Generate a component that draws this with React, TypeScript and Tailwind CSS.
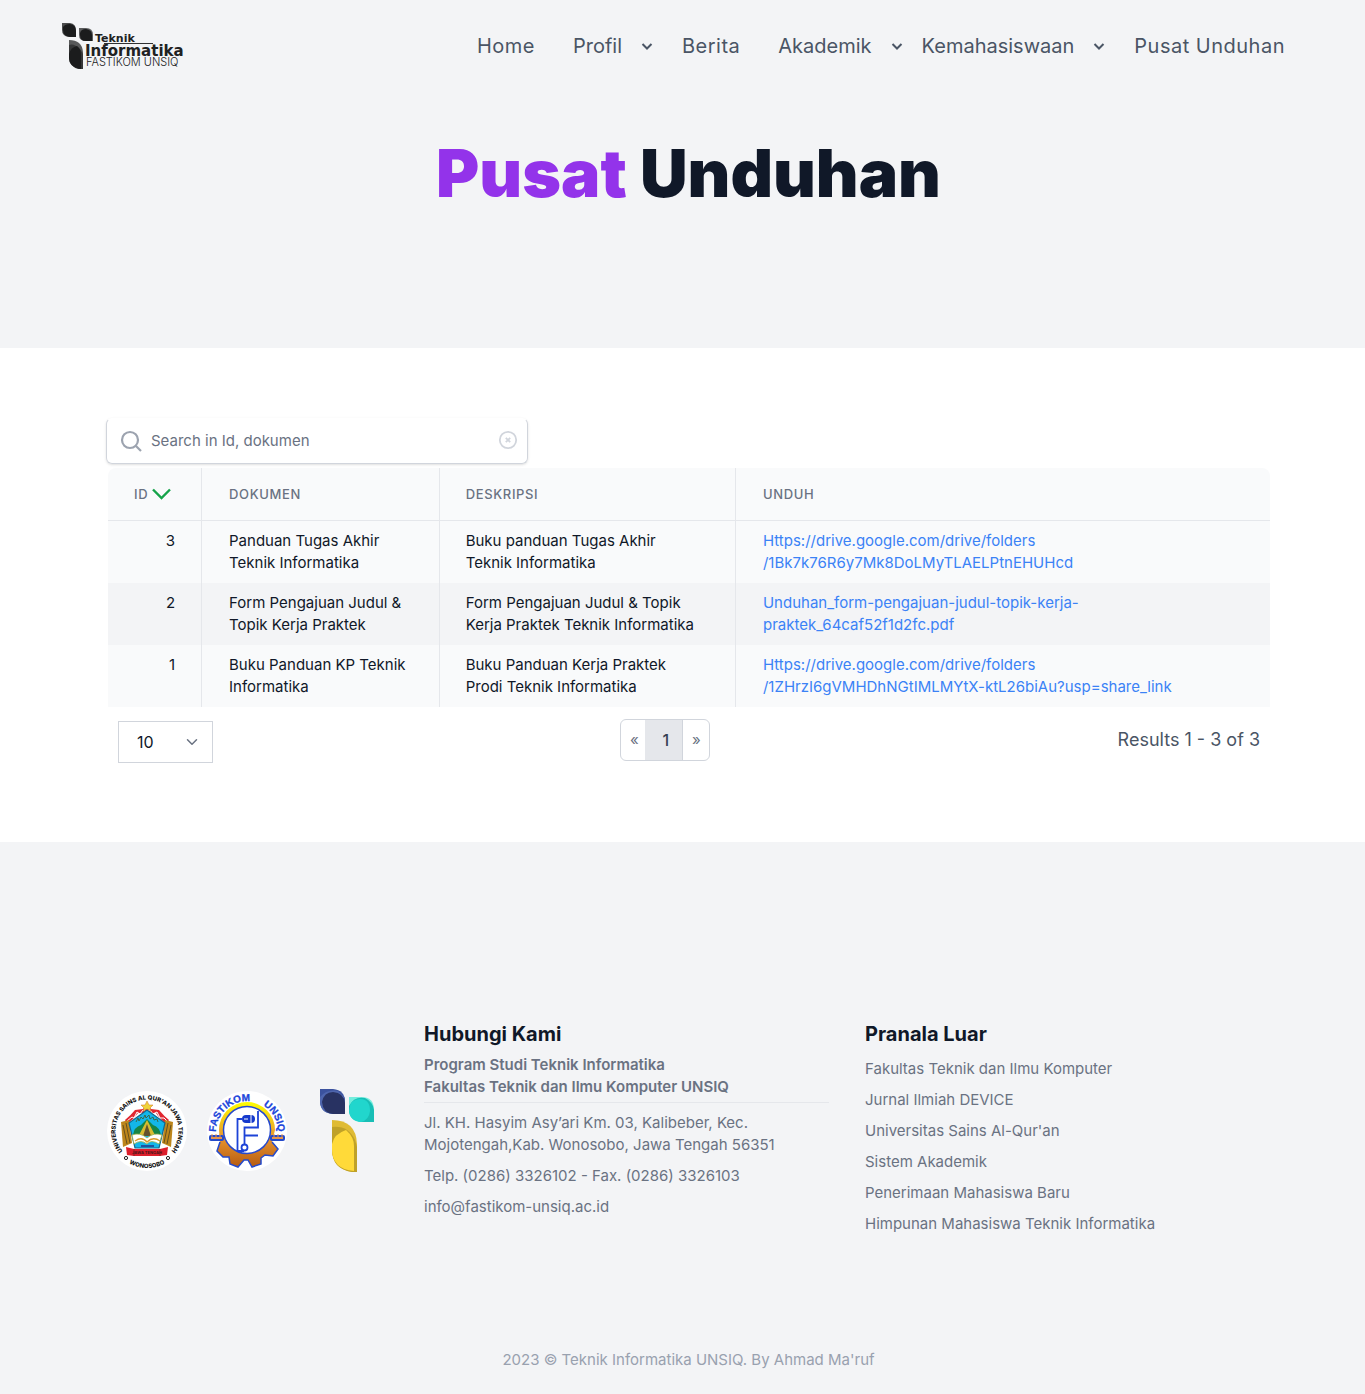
import React from 'react';
import { ChevronDown } from 'lucide-react';

const menu = [
  { label: 'Home', space: '' },
  { label: 'Profil', space: 'ml-[38px]', dropdown: true },
  { label: 'Berita', space: 'ml-[26px]' },
  { label: 'Akademik', space: 'ml-[38px]', dropdown: true },
  { label: 'Kemahasiswaan', space: 'ml-4', dropdown: true },
  { label: 'Pusat Unduhan', space: 'ml-[26px]' },
];

const documents = [
  {
    id: 3,
    name: 'Panduan Tugas Akhir Teknik Informatika',
    description: 'Buku panduan Tugas Akhir Teknik Informatika',
    link: ['Https://drive.google.com/drive/folders', '/1Bk7k76R6y7Mk8DoLMyTLAELPtnEHUHcd'],
  },
  {
    id: 2,
    name: 'Form Pengajuan Judul & Topik Kerja Praktek',
    description: 'Form Pengajuan Judul & Topik Kerja Praktek Teknik Informatika',
    link: ['Unduhan_form-pengajuan-judul-topik-kerja-', 'praktek_64caf52f1d2fc.pdf'],
  },
  {
    id: 1,
    name: 'Buku Panduan KP Teknik Informatika',
    description: 'Buku Panduan Kerja Praktek Prodi Teknik Informatika',
    link: ['Https://drive.google.com/drive/folders', '/1ZHrzI6gVMHDhNGtIMLMYtX-ktL26biAu?usp=share_link'],
  },
];

const externalLinks = [
  'Fakultas Teknik dan Ilmu Komputer',
  'Jurnal Ilmiah DEVICE',
  "Universitas Sains Al-Qur'an",
  'Sistem Akademik',
  'Penerimaan Mahasiswa Baru',
  'Himpunan Mahasiswa Teknik Informatika',
];

function SiteLogo() {
  return (
    <svg width="126" height="46" viewBox="0 0 126 46" role="img" aria-label="Teknik Informatika FASTIKOM UNSIQ" className="shrink-0">
      <path d="M0 0H8Q14 1 14 7V14H7Q0 13 0 7Z" fill="#4b4c4d" />
      <path d="M1 4Q3 1 8 1Q14 2 14 8V14H8Q1 13 1 7Z" fill="#1b1c1d" />
      <path d="M17 5H24Q31 5 31 12V18H24Q17 18 17 12Z" fill="#5c5d5e" />
      <path d="M18 10Q19 6 24 6Q30 7 30 12V18H24Q18 18 18 12Z" fill="#1b1c1d" />
      <path d="M7 17Q20 17 21 29V46H18Q7 44 7 34Z" fill="#58595a" />
      <path d="M7 22Q12 20 18 26L21 31V46H17Q7 44 7 34Z" fill="#353637" />
      <path d="M7 31Q9 24 15 23Q19 26 19 32V46Q7 44 7 34Z" fill="#1b1c1d" />
      <g fill="#202122">
        <text x="33" y="19" fontFamily="DejaVu Sans, sans-serif" fontSize="11" fontWeight="700">Teknik</text>
        <text x="23" y="33" fontFamily="DejaVu Sans, sans-serif" fontSize="15" fontWeight="700">Informatika</text>
        <text x="24" y="43" fontFamily="Inter, sans-serif" fontSize="11" fontWeight="300">FASTIKOM UNSIQ</text>
      </g>
      <path d="M42 20.5H91" stroke="#303132" />
    </svg>
  );
}

function UniversityEmblem() {
  return (
    <svg width="80" height="80" viewBox="0 0 80 80" role="img" aria-label="Universitas Sains Al-Qur'an Jawa Tengah Wonosobo">
      <defs>
        <path id="uni-top" d="M17.7 62.3A31.5 31.5 0 1 1 62.3 62.3" />
        <path id="uni-bottom" d="M13.8 66.2A37 37 0 0 0 66.2 66.2" />
      </defs>
      <circle cx="40" cy="40" r="40" fill="#fff" />
      <g fill="#151515" fontFamily="Inter, sans-serif" fontWeight="800" textAnchor="middle">
        <text fontSize="6"><textPath href="#uni-top" startOffset="50%">UNIVERSITAS SAINS AL QUR'AN JAWA TENGAH</textPath></text>
        <text fontSize="6"><textPath href="#uni-bottom" startOffset="50%">WONOSOBO</textPath></text>
      </g>
      <circle cx="19" cy="67" r="1.6" fill="none" stroke="#222" />
      <circle cx="61" cy="67" r="1.6" fill="none" stroke="#222" />
      <path d="M18 29Q24 24 28 19L36 18L40 13L44 18L52 19Q57 25 62 29L59 33Q52 27 49 22H31Q27 28 20 33Z" fill="#e12832" />
      <path d="M20 30L25 26L27 27L30 21L33 23L36 19L39 21L43 19L46 23L50 21L53 27L57 27L60 30" fill="none" stroke="#fff" strokeWidth="1" />
      <path d="M14 31L22 29L25 52L16 56Z" fill="#bd861c" />
      <path d="M66 31L58 29L55 52L64 56Z" fill="#bd861c" />
      <path d="M16 34L20 53M19 32L23 52M64 34L60 53M61 32L57 52" stroke="#66501e" strokeWidth="1" />
      <path d="M40 19L22 32L28 57H52L58 32Z" fill="#13b6e9" stroke="#13668e" strokeWidth="1.2" />
      <path d="M26 44Q27 36 34 34L40 28L46 34Q53 36 54 45Z" fill="#178446" />
      <path d="M40 29L32 44H48Z" fill="#d7bb2f" />
      <path d="M40 33L36 45H44Z" fill="#64522b" />
      <path d="M25 44Q33 41 40 47Q47 41 55 44L52 53Q44 48 40 53Q34 48 27 53Z" fill="#fff" stroke="#9ab14a" strokeWidth=".8" />
      <path d="M28 50Q35 45 40 51Q46 45 53 50" fill="none" stroke="#db9927" strokeWidth="1.3" />
      <path d="M29 31L31 27L32 30L34 26L36 28L38 24L39 27L42 24L43 28L46 26L47 29L50 28L51 31" fill="none" stroke="#3c5f3a" strokeWidth=".9" />
      <path d="M34 55H47" stroke="#1e53a0" strokeWidth="2" />
      <path d="M40 10L42 14L46 14L43 17L44 20L40 18L36 20L37 17L34 14L38 14Z" fill="#efd33a" stroke="#d37221" strokeWidth=".5" />
      <path d="M19 56L27 58H53L61 56L60 64L53 65H27L20 64Z" fill="#dc1e2b" />
      <path d="M27 58V65M53 58V65" stroke="#8e1f24" />
      <text x="40" y="63" fontFamily="Inter, sans-serif" fontWeight="700" fontSize="4" textAnchor="middle" fill="#451719">JAWA TENGAH</text>
    </svg>
  );
}

function FacultyEmblem() {
  return (
    <svg width="80" height="80" viewBox="0 0 80 80" role="img" aria-label="Fastikom UNSIQ">
      <defs>
        <path id="faculty-arc" d="M9 41A31 31 0 0 1 71 41" />
        <linearGradient id="gear-gradient" x1="0" y1="0" x2="0" y2="1">
          <stop offset="0" stopColor="#ffff00" />
          <stop offset=".55" stopColor="#e8942f" />
          <stop offset="1" stopColor="#b55b11" />
        </linearGradient>
      </defs>
      <circle cx="40" cy="40" r="40" fill="#fff" />
      <g fontFamily="Liberation Sans, sans-serif" fontSize="10" fontWeight="700" fill="#1b45db" stroke="#1b45db" strokeWidth=".3">
        <text><textPath href="#faculty-arc">FASTIKOM</textPath></text>
        <text textAnchor="end"><textPath href="#faculty-arc" startOffset="100%">UNSIQ</textPath></text>
      </g>
      <path d="M12 39A28 28 0 0 1 68 39L65 51L71 58L66 65L58 64L54 67V73L45 76L41 69H37L31 76L23 73L22 66L16 66L10 60L13 52Z" fill="url(#gear-gradient)" />
      <path d="M13 51L10 60L16 66L22 66L23 73L31 76L37 69H41L45 76L54 73V67L58 64L66 65L71 58L65 51" fill="none" stroke="#244acb" strokeWidth="1.5" />
      <rect x="2" y="44" width="15" height="6" rx="2" fill="#244acb" />
      <rect x="63" y="44" width="15" height="6" rx="2" fill="#244acb" />
      <path d="M4 47H15M65 47H76" stroke="#e6954c" strokeWidth="2" />
      <path d="M5 46V43M9 46V43M13 46V43M67 46V43M71 46V43M75 46V43" stroke="#e6954c" />
      <circle cx="40" cy="39" r="23.5" fill="#fff" stroke="#2549ce" strokeWidth="1.5" />
      <path d="M35 28H30.5V60H37" fill="none" stroke="#1d43d7" strokeWidth="1.8" />
      <path d="M51 20V36.5H37.5V53M37.5 44.5H51" fill="none" stroke="#1d43d7" strokeWidth="1.8" />
      <rect x="35" y="24" width="13" height="8" rx="4" fill="#1539cc" />
      <path d="M37 28H41M44 24V32" stroke="#fff" strokeWidth="1" />
      <circle cx="37.5" cy="56.5" r="3" fill="#fff" stroke="#1d43d7" strokeWidth="1.8" />
    </svg>
  );
}

function ProgramEmblem() {
  return (
    <svg width="54" height="84" viewBox="0 0 54 84" role="img" aria-label="Teknik Informatika">
      <path d="M0 0H13Q25 1 25 13V25H13Q0 24 0 12Z" fill="#3b529e" />
      <path d="M0 8Q7 0 18 2L25 9V25H13Q0 24 0 12Z" fill="#4e65ad" />
      <path d="M2 13Q4 3 13 3Q24 4 25 14V25H13Q3 24 2 13Z" fill="#283262" />
      <path d="M29 8H41Q54 8 54 21V33H42Q29 33 29 20Z" fill="#73eddd" />
      <path d="M29 17Q34 7 45 9Q53 13 54 21V33H42Q29 32 29 20Z" fill="#18beb6" />
      <path d="M29 21Q30 10 40 10Q50 10 50 22Q49 31 41 33Q29 31 29 21Z" fill="#21d6cd" />
      <path d="M12 31Q36 31 37 55V83H32Q12 80 12 60Z" fill="#dfbb34" />
      <path d="M12 38Q28 36 35 51L37 58V83H32Q12 80 12 60Z" fill="#bfa128" />
      <path d="M12 55Q14 45 26 41Q34 48 34 57V82Q12 80 12 60Z" fill="#ffda39" />
    </svg>
  );
}

export default function App() {
  return (
    <div className="bg-white font-['Inter',sans-serif] text-[15px] leading-[22px] text-gray-900">
      <header className="h-[348px] bg-gray-100">
        <nav aria-label="Utama" className="flex h-[92px] items-center justify-between pl-[62px] pr-20">
          <a href="#home" aria-label="Beranda"><SiteLogo /></a>
          <ul className="flex items-center text-xl text-gray-600">
            {menu.map((item) => (
              <li key={item.label} className={item.space}>
                {item.dropdown ? (
                  <button type="button" className="flex items-center gap-4">
                    {item.label}
                    <svg width="18" height="18" viewBox="0 0 18 18" fill="none" stroke="currentColor" strokeWidth="2" aria-hidden="true"><path d="M4.500 7L9 11.500L13.500 7" /></svg>
                  </button>
                ) : (
                  <a href="#menu" className="tracking-wide">{item.label}</a>
                )}
              </li>
            ))}
          </ul>
        </nav>
        <h1 className="mt-[47px] pl-3 text-center text-[66px] leading-[68px] font-black">
          <span className="text-[#9333ea]">Pusat</span> Unduhan
        </h1>
      </header>

      <main className="pt-[70px] pr-[95px] pb-[79px] pl-[108px]">
        <div className="-ml-0.5 flex h-[46px] w-[422px] items-center rounded-md border border-gray-300 border-t-transparent pr-2 pl-3 shadow-sm">
          <svg width="24" height="24" viewBox="0 0 24 24" fill="none" stroke="#9ca3af" strokeWidth="2.2" aria-hidden="true">
            <circle cx="11" cy="11" r="8" />
            <path d="M17 17L22 22" />
          </svg>
          <input type="search" aria-label="Search" placeholder="Search in Id, dokumen" className="ml-2 min-w-0 flex-1 outline-none placeholder:text-gray-500" />
          <button type="button" aria-label="Clear search" className="mb-0.5 text-gray-300">
            <svg width="22" height="22" viewBox="0 0 22 22" fill="none" stroke="currentColor" strokeWidth="1.8">
              <circle cx="11" cy="11" r="8.2" />
              <path d="M8.8 8.8L13.2 13.2M13.2 8.8L8.8 13.2" />
            </svg>
          </button>
        </div>

        <div className="mt-1 overflow-hidden rounded-t-lg">
          <table className="w-full table-fixed border-collapse bg-gray-50 text-left">
            <colgroup>
              <col className="w-[8.05%]" />
              <col className="w-[20.45%]" />
              <col className="w-[25.5%]" />
              <col />
            </colgroup>
            <thead>
              <tr className="h-[52px] border-b border-gray-200 text-[13px] text-gray-500 uppercase">
                <th scope="col" className="border-r border-gray-200 pl-[26px] font-medium tracking-wider">
                  <button type="button" className="flex items-center gap-1 tracking-wider uppercase">
                    Id
                    <svg width="19" height="12" viewBox="0 0 19 12" fill="none" stroke="#16a34a" strokeWidth="2.4" aria-hidden="true"><path d="M1 1.500L9.500 10L18 1.500" /></svg>
                  </button>
                </th>
                <th scope="col" className="border-r border-gray-200 pl-[27px] font-medium tracking-wider">Dokumen</th>
                <th scope="col" className="border-r border-gray-200 pl-[26px] font-medium tracking-wider">Deskripsi</th>
                <th scope="col" className="pl-[27px] font-medium tracking-wider">Unduh</th>
              </tr>
            </thead>
            <tbody>
              {documents.map((doc) => (
                <tr key={doc.id} className="align-top even:bg-gray-100">
                  <td className="border-r border-gray-200 px-[26px] py-[9px] text-right">{doc.id}</td>
                  <td className="border-r border-gray-200 px-[27px] py-[9px]">{doc.name}</td>
                  <td className="border-r border-gray-200 py-[9px] pr-9 pl-[26px]">{doc.description}</td>
                  <td className="px-[27px] py-[9px]">
                    <a href="#unduh" className="text-[#3b82f6]">{doc.link[0]}<br />{doc.link[1]}</a>
                  </td>
                </tr>
              ))}
            </tbody>
          </table>
        </div>

        <div className="mt-3 flex items-start justify-between px-2.5">
          <div className="relative mt-0.5">
            <select aria-label="Rows per page" defaultValue="10" className="h-[42px] w-[95px] appearance-none border border-gray-300 bg-white pl-[18px] text-base">
              <option>10</option>
              <option>25</option>
              <option>50</option>
            </select>
            <ChevronDown size={18} className="pointer-events-none absolute top-3 right-3 text-gray-500" aria-hidden="true" />
          </div>
          <div className="flex h-[42px] overflow-hidden rounded-md border border-gray-300 text-gray-500">
            <button type="button" aria-label="Previous page" className="w-6 pl-0.5">«</button>
            <button type="button" aria-current="page" className="w-[38px] border-r border-gray-300 bg-gray-200 pl-1 text-base font-medium text-gray-700">1</button>
            <button type="button" aria-label="Next page" className="w-[26px]">»</button>
          </div>
          <p className="mt-[9px] text-lg leading-6 text-gray-600">Results 1 - 3 of 3</p>
        </div>
      </main>

      <footer className="bg-gray-100 pt-[178px] pr-[95px] pb-[23px] pl-[107px] text-gray-500">
        <div className="grid grid-cols-[281px_1fr_1fr] gap-x-9">
          <div className="flex items-start pt-[69px]">
            <div className="mt-0.5 mr-5"><UniversityEmblem /></div>
            <div className="mt-0.5 mr-[33px]"><FacultyEmblem /></div>
            <ProgramEmblem />
          </div>
          <section>
            <h2 className="text-xl leading-7 font-bold text-gray-900">Hubungi Kami</h2>
            <p className="mt-1.5 border-b border-gray-200 pb-1 font-semibold">
              Program Studi Teknik Informatika<br />Fakultas Teknik dan Ilmu Komputer UNSIQ
            </p>
            <address className="mt-[9px] flex flex-col gap-[9px] not-italic">
              <p>Jl. KH. Hasyim Asy’ari Km. 03, Kalibeber, Kec. Mojotengah,Kab. Wonosobo, Jawa Tengah 56351</p>
              <p>Telp. (0286) 3326102 - Fax. (0286) 3326103</p>
              <p>info@fastikom-unsiq.ac.id</p>
            </address>
          </section>
          <section>
            <h2 className="text-xl leading-7 font-bold text-gray-900">Pranala Luar</h2>
            <ul className="mt-2.5 flex flex-col gap-[9px]">
              {externalLinks.map((label) => (
                <li key={label}><a href="#pranala">{label}</a></li>
              ))}
            </ul>
          </section>
        </div>
        <p className="mt-[114px] text-center text-gray-400">2023 © Teknik Informatika UNSIQ. By Ahmad Ma'ruf</p>
      </footer>
    </div>
  );
}
